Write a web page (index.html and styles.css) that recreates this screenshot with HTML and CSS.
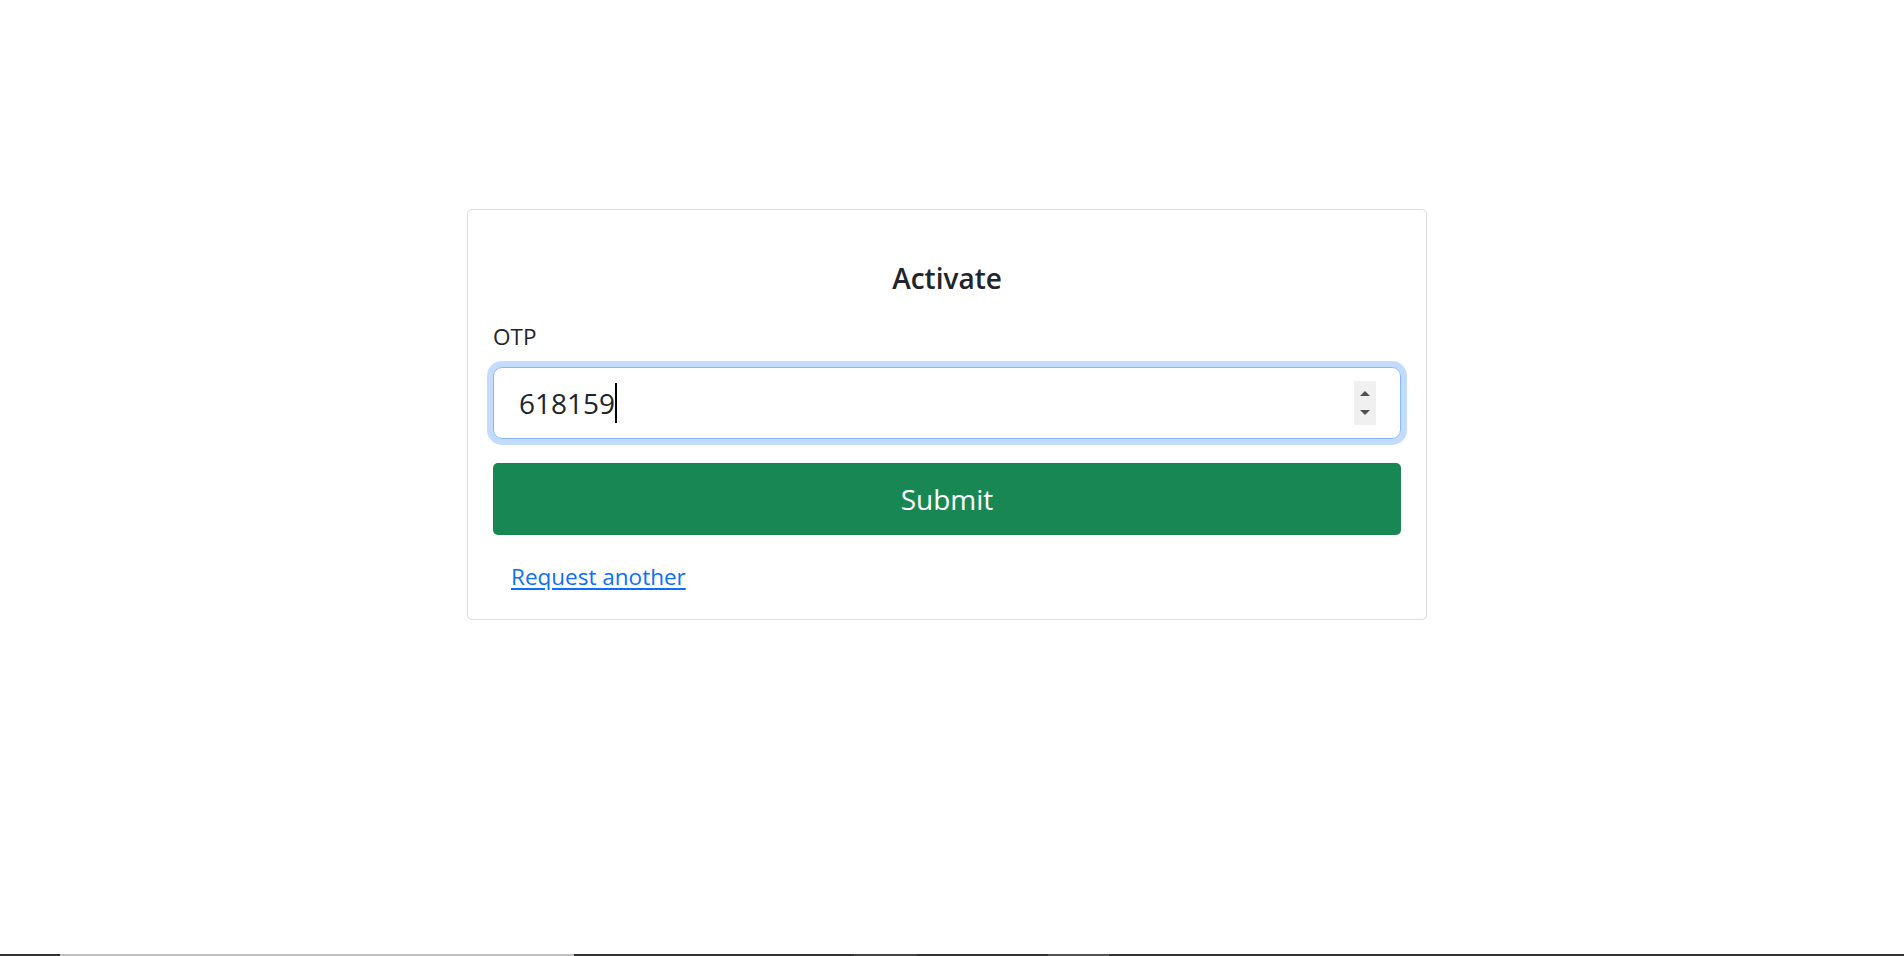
FILE: index.html
```html
<!DOCTYPE html>
<html lang="en">
<head>
<meta charset="utf-8">
<title>Activate</title>
<link rel="stylesheet" href="styles.css">
</head>
<body>
<div class="page">
  <div class="content">
    <main class="card">
      <h1 class="title">Activate</h1>
      <form class="form" onsubmit="return false">
        <label class="label" for="otp">OTP</label>
        <div class="field" id="otp" role="textbox" aria-label="OTP">
          <span class="value">618159</span><span class="caret"></span>
          <span class="spin" aria-hidden="true">
            <svg width="22" height="44" viewBox="0 0 22 44">
              <path d="M6 15 L11 10 L16 15 Z" fill="#505050"/>
              <path d="M6 29 L11 34 L16 29 Z" fill="#505050"/>
            </svg>
          </span>
        </div>
        <button class="submit" type="submit">Submit</button>
        <div class="actions"><a class="link" href="#">Request another</a></div>
      </form>
    </main>
  </div>
  <div class="taskbar">
    <span class="seg seg-a"></span>
    <span class="seg seg-b"></span>
    <span class="seg seg-a2"></span>
    <span class="seg seg-c"></span>
    <span class="seg seg-a3"></span>
    <span class="seg seg-d"></span>
    <span class="seg seg-rest"></span>
  </div>
</div>
</body>
</html>
```
FILE: styles.css
```css
* { box-sizing: border-box; }
html, body { margin: 0; padding: 0; background: #fff; }
body {
  font-family: "Open Sans", "Noto Sans", sans-serif;
  color: #212529;
}
.page {
  min-height: 956px;
  display: flex;
  flex-direction: column;
}
.content {
  flex: 1;
  padding-top: 209px;
}
.card {
  width: 960px;
  margin-left: calc(50% - 485px);
  border: 1px solid #dedede;
  border-radius: 5px;
  padding: 50px 25px 14px;
}
.title {
  margin: 0 0 23px;
  font-size: 28px;
  font-weight: 600;
  line-height: 36px;
  text-align: center;
  color: #212529;
}
.form { display: flex; flex-direction: column; }
.label {
  font-size: 22.5px;
  line-height: 36px;
  margin-bottom: 12px;
  color: #212529;
}
.field {
  height: 72px;
  border: 1.5px solid #86b7fe;
  border-radius: 9px;
  box-shadow: 0 0 0 6px #c2dbfe;
  display: flex;
  align-items: center;
  padding: 0 24px 0 25px;
  margin-bottom: 24px;
}
.value {
  font-size: 28px;
  line-height: 45px;
  color: #212529;
}
.caret {
  width: 2px;
  height: 40px;
  background: #000;
  margin-left: 0;
}
.spin {
  margin-left: auto;
  width: 22px;
  height: 44px;
  background: #f0f0f0;
  display: block;
}
.spin svg { display: block; }
.submit {
  height: 72px;
  border: 0;
  border-radius: 5px;
  background: #198754;
  color: #fff;
  font-family: inherit;
  font-size: 28px;
  line-height: 45px;
  padding: 0;
  cursor: pointer;
}
.actions {
  margin-top: 14px;
  display: flex;
}
.link {
  padding: 10px 19px 10px 18px;
  font-size: 22.5px;
  line-height: 36px;
  color: #0d6efd;
  text-decoration: underline;
  text-underline-offset: 3px;
}
.taskbar {
  height: 2px;
  display: flex;
}
.seg { display: block; height: 2px; }
.seg-a { width: 60px; background: #333; }
.seg-b { width: 514px; background: #c0c0c0; }
.seg-a2 { width: 280px; background: #333; }
.seg-c { width: 63px; background: #444; }
.seg-a3 { width: 131px; background: #333; }
.seg-d { width: 61px; background: #555; }
.seg-rest { flex: 1; background: #333; }
```
